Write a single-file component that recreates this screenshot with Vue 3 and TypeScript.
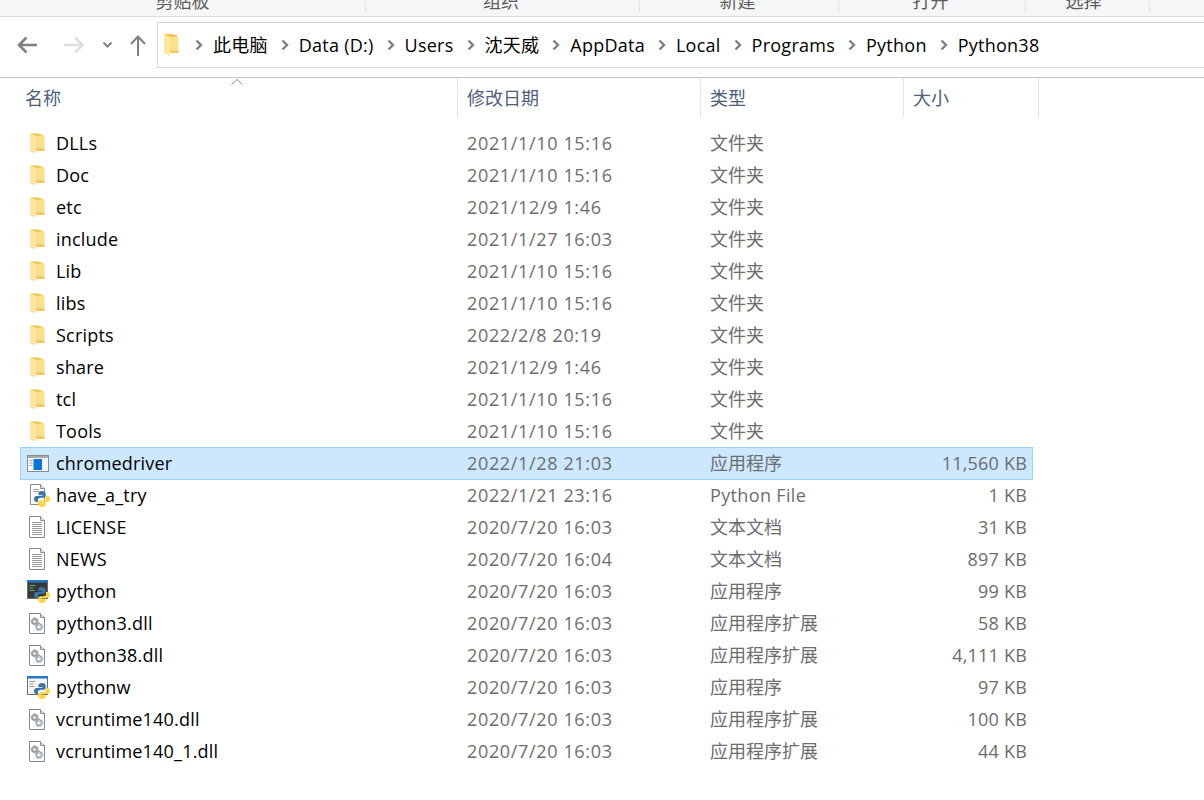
<script setup lang="ts">
type Kind = 'folder' | 'exe' | 'py' | 'txt' | 'python' | 'dll' | 'pythonw'
interface Row { name: string; date: string; type: string; size: string; kind: Kind; selected?: boolean }

const crumbs = ['此电脑', 'Data (D:)', 'Users', '沈天威', 'AppData', 'Local', 'Programs', 'Python', 'Python38']
const ribbon = [
  { label: '剪贴板', width: 366, shift: 0 },
  { label: '组织', width: 274, shift: 3 },
  { label: '新建', width: 199, shift: 3 },
  { label: '打开', width: 187, shift: 3 },
  { label: '选择', width: 124, shift: 8 },
]
const columns = [
  { label: '名称', width: 458 },
  { label: '修改日期', width: 243 },
  { label: '类型', width: 203 },
  { label: '大小', width: 135 },
]
const folder = (name: string, date: string): Row => ({ name, date, type: '文件夹', size: '', kind: 'folder' })
const rows: Row[] = [
  folder('DLLs', '2021/1/10 15:16'),
  folder('Doc', '2021/1/10 15:16'),
  folder('etc', '2021/12/9 1:46'),
  folder('include', '2021/1/27 16:03'),
  folder('Lib', '2021/1/10 15:16'),
  folder('libs', '2021/1/10 15:16'),
  folder('Scripts', '2022/2/8 20:19'),
  folder('share', '2021/12/9 1:46'),
  folder('tcl', '2021/1/10 15:16'),
  folder('Tools', '2021/1/10 15:16'),
  { name: 'chromedriver', date: '2022/1/28 21:03', type: '应用程序', size: '11,560 KB', kind: 'exe', selected: true },
  { name: 'have_a_try', date: '2022/1/21 23:16', type: 'Python File', size: '1 KB', kind: 'py' },
  { name: 'LICENSE', date: '2020/7/20 16:03', type: '文本文档', size: '31 KB', kind: 'txt' },
  { name: 'NEWS', date: '2020/7/20 16:04', type: '文本文档', size: '897 KB', kind: 'txt' },
  { name: 'python', date: '2020/7/20 16:03', type: '应用程序', size: '99 KB', kind: 'python' },
  { name: 'python3.dll', date: '2020/7/20 16:03', type: '应用程序扩展', size: '58 KB', kind: 'dll' },
  { name: 'python38.dll', date: '2020/7/20 16:03', type: '应用程序扩展', size: '4,111 KB', kind: 'dll' },
  { name: 'pythonw', date: '2020/7/20 16:03', type: '应用程序', size: '97 KB', kind: 'pythonw' },
  { name: 'vcruntime140.dll', date: '2020/7/20 16:03', type: '应用程序扩展', size: '100 KB', kind: 'dll' },
  { name: 'vcruntime140_1.dll', date: '2020/7/20 16:03', type: '应用程序扩展', size: '44 KB', kind: 'dll' },
]
const snake = 'M8 0C5.400 0 4.400 1.100 4.400 2.500V4.300H8.400V5H2.500C1 5 0 6.200 0 8C0 9.800 1 10.900 2.500 10.900H4V9C4 7.700 5 6.700 6.300 6.700H9.800C10.900 6.700 11.700 5.900 11.700 4.800V2.500C11.700 1 10.200 0 8 0Z'
const gear = 'M0-3.600 1-3.500 1.300-2.300 2.400-2.700 3.200-2 2.600-1 3.500-.2 3.400 .9 2.300 1 2.400 2.200 1.500 2.900 .6 2.200-.1 3.300-1.200 3.100-1.300 1.900-2.500 2.100-3.100 1.200-2.300 .4-3.400-.5-3-1.500-1.800-1.400-1.900-2.600-1-3.300Z'
</script>

<template>
  <div class="win">
    <div class="ribbon">
      <div v-for="r in ribbon" :key="r.label" class="rib-group" :style="{ width: r.width + 'px', paddingRight: r.shift + 'px' }">
        <span class="rib-label">{{ r.label }}</span>
      </div>
    </div>

    <div class="nav">
      <svg class="nav-icons" width="157" height="60" viewBox="0 0 157 60">
        <path d="M19 28h18M26.500 20.500l-7.500 7.500 7.500 7.500" fill="none" stroke="#808080" stroke-width="2.600" />
        <path d="M64 28h18M75 20.500l7.500 7.500-7.500 7.500" fill="none" stroke="#dedede" stroke-width="2.600" />
        <path d="M103.500 25.500l4 4 4-4" fill="none" stroke="#808080" stroke-width="2" />
        <path d="M138 39V20.500M131 27l7-7.500 7 7.500" fill="none" stroke="#808080" stroke-width="2" />
      </svg>
      <div class="address">
        <svg class="addr-folder" width="15" height="22" viewBox="0 0 15 22">
          <path d="M0 0h9l1 1h3v17H0z" fill="#f2c452" />
          <path d="M6 3h8.500v16H6z" fill="#fbe08a" />
          <path d="M6 16.500h8.500V19H6z" fill="#f2c860" />
          <path d="M0 0l6 3v19l-6-3z" fill="#fde8a2" />
        </svg>
        <template v-for="c in crumbs" :key="c">
          <svg class="chev" width="10" height="12" viewBox="0 0 10 12"><path d="M2.500 1.500L7 6l-4.500 4.500" fill="none" stroke="#808080" stroke-width="2.400" /></svg>
          <span class="crumb">{{ c }}</span>
        </template>
      </div>
    </div>

    <div class="header">
      <svg class="sort" width="12" height="6" viewBox="0 0 12 6"><path d="M.5 5.500L6 .5l5.500 5" fill="none" stroke="#8a8a8a" /></svg>
      <div v-for="(c, i) in columns" :key="c.label" class="col" :class="{ first: i === 0 }" :style="{ width: c.width + 'px' }">{{ c.label }}</div>
    </div>

    <div class="list">
      <div v-for="r in rows" :key="r.name" class="row" :class="{ selected: r.selected }">
        <span class="ic">
          <svg width="24" height="24" viewBox="0 0 24 24">
            <template v-if="r.kind === 'folder'">
              <path d="M4 2.500h9l1 1h3v16H4z" fill="#f2c452" />
              <path d="M10 5h8.500v15H10z" fill="#fbe08a" />
              <path d="M10 17.500h8.500V20H10z" fill="#f2c860" />
              <path d="M4 2.500l6 2.500v18l-6-3z" fill="#fde8a2" />
            </template>
            <template v-else-if="r.kind === 'exe'">
              <rect x="1.500" y="4.500" width="21" height="16" fill="#f6f6f6" stroke="#8c8c8c" />
              <rect x="2" y="5" width="20" height="2" fill="#a9a9a9" />
              <rect x="7.500" y="8" width="8.500" height="11" fill="#0a74d8" />
              <path d="M3.500 9.500h3M3.500 12h3M3.500 14.500h3" stroke="#8fa7c0" />
            </template>
            <template v-else-if="r.kind === 'txt'">
              <path d="M3.500 1.500h11l4 4v17h-15z" fill="#fff" stroke="#8a8a8a" />
              <path d="M14.500 1.500v4h4" fill="#e6e6e6" stroke="#8a8a8a" />
              <path d="M6 7.500h10M6 9.500h10M6 11.500h10M6 13.500h10M6 15.500h10M6 17.500h10M6 19.500h10" stroke="#9a9a9a" />
            </template>
            <template v-else-if="r.kind === 'py'">
              <path d="M4.500 1.500h10l4 4v16h-14z" fill="#fff" stroke="#8a8a8a" />
              <path d="M14.500 1.500v4h4" fill="#e6e6e6" stroke="#8a8a8a" />
              <path d="M7 6.500h6M7 8.500h6" stroke="#a5a5a5" />
              <g transform="translate(8 8)">
                <path :d="snake" fill="#3a76a8" />
                <path :d="snake" fill="#ffd545" transform="rotate(180 8 8)" />
              </g>
            </template>
            <template v-else-if="r.kind === 'dll'">
              <path d="M3.500 2.500h11l4 4v16h-15z" fill="#fff" stroke="#8a8a8a" />
              <path d="M14.500 2.500v4h4" fill="#e6e6e6" stroke="#8a8a8a" />
              <g transform="translate(8.500 10.500)"><path :d="gear" fill="#b5b5b5" stroke="#7d7d7d" stroke-width=".8" /><circle r="1" fill="#fff" /></g>
              <g transform="translate(13 16) scale(1.050)"><path :d="gear" fill="#c4ced6" stroke="#7d8b96" stroke-width=".8" /><circle r="1" fill="#fff" /></g>
            </template>
            <template v-else>
              <rect x="1.500" y="1.500" width="20" height="18" :fill="r.kind === 'python' ? '#35393a' : '#f4f4f4'" stroke="#6f6f6f" />
              <rect x="1" y="1" width="21" height="2.500" fill="#1f78c8" />
              <path d="M3.500 6.500h6M3.500 9h4M3.500 11.500h5" :stroke="r.kind === 'python' ? '#5fae5f' : '#9a9a9a'" stroke-width="1.200" />
              <g transform="translate(8 8)">
                <path :d="snake" fill="#3a76a8" />
                <path :d="snake" fill="#ffd545" transform="rotate(180 8 8)" />
              </g>
            </template>
          </svg>
        </span>
        <span class="name">{{ r.name }}</span>
        <span class="date">{{ r.date }}</span>
        <span class="type" :class="{ latin: r.type === 'Python File' }">{{ r.type }}</span>
        <span class="size">{{ r.size }}</span>
      </div>
    </div>
  </div>
</template>

<style>
html, body { margin: 0; background: #fff; }
</style>

<style scoped>
.win {
  width: 1204px;
  height: 800px;
  overflow: hidden;
  background: #fff;
  font-family: "Open Sans", "Noto Sans CJK SC", sans-serif;
  font-size: 18px;
  color: #000;
}
.ribbon {
  display: flex;
  height: 16px;
  background: #f5f6f7;
  border-bottom: 1px solid #dadbdc;
  overflow: hidden;
}
.rib-group {
  height: 13px;
  flex: none;
  display: flex;
  justify-content: center;
  align-items: flex-end;
  border-right: 1px solid #e2e3e4;
  box-sizing: border-box;
}
.rib-label {
  font-size: 18px;
  line-height: 20px;
  color: #5c5c5c;
  margin-bottom: 2px;
  flex: none;
}
.nav {
  display: flex;
  height: 60px;
  border-bottom: 1px solid #c6c6c6;
}
.nav-icons { flex: none; }
.address {
  flex: 1;
  height: 44px;
  margin-top: 5px;
  border: 1px solid #d9d9d9;
  border-right: 0;
  display: flex;
  align-items: center;
  padding-left: 6px;
}
.addr-folder { flex: none; margin-right: 15px; }
.chev { flex: none; margin-right: 9px; }
.crumb { margin-right: 12px; white-space: nowrap; line-height: 24px; letter-spacing: .25px; }
.header {
  position: relative;
  display: flex;
  height: 40px;
}
.sort { position: absolute; left: 231px; top: 1px; }
.col {
  flex: none;
  box-sizing: border-box;
  height: 40px;
  line-height: 40px;
  padding-left: 9px;
  color: #4c607a;
  border-right: 1px solid #e5e5e5;
}
.col.first { padding-left: 25px; }
.list {
  margin: 9px 0 0 20px;
  width: 1013px;
}
.row {
  display: grid;
  grid-template-columns: 36px 411px 243px 1fr 120px;
  height: 32px;
  line-height: 32px;
  box-sizing: border-box;
  align-items: start;
}
.row.selected {
  height: 33px;
  margin-bottom: -1px;
  background: #cce8ff;
  box-shadow: inset 0 0 0 1px #99d1ff;
}
.ic { display: flex; align-items: center; padding-left: 6px; height: 32px; }
.name { white-space: nowrap; letter-spacing: .2px; }
.date, .type, .size { color: #6d6d6d; white-space: nowrap; }
.date { letter-spacing: .65px; }
.type.latin { letter-spacing: .35px; }
.size { text-align: right; padding-right: 6px; letter-spacing: .2px; }
</style>
